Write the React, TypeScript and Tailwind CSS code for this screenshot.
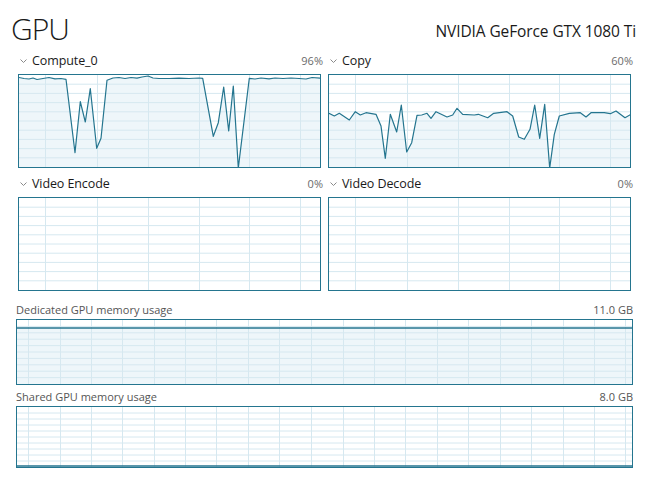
import React from "react";

type Pt = [number, number];

const LINE = "#24758f";
const FILL = "#eef6fa";
const GRID = "#d6e8f0";

const computePts: Pt[] = [
  [0, 2.5], [5, 3.5], [10, 4], [14, 3], [18, 4.5], [24, 3.5], [30, 2.5], [36, 3.8], [42, 3.5], [47, 4.3],
  [56, 77.7], [61.3, 26.7], [66.3, 47], [71.3, 13.7], [77.7, 73.3], [82, 63.3],
  [88, 5.3], [94, 3], [100, 2.5], [106, 3.5], [112, 2.5], [118, 3.2], [123, 2], [129, 1], [134, 3],
  [140, 3.5], [150, 3.5], [160, 3.2], [170, 3.5], [180, 3], [183.7, 3.3],
  [194.3, 61.3], [199.3, 47.7], [204.7, 12], [209.7, 56], [214.3, 11], [219.3, 93],
  [230.3, 3.3], [236, 4], [242, 3], [250, 3.8], [256, 3], [264, 3.5], [272, 3], [280, 3.5],
  [287, 4], [293, 2.5], [302, 3.3],
];

const copyPts: Pt[] = [
  [0, 38.3], [5.3, 41], [10.3, 38.3], [20.3, 45], [26.3, 36.7], [31.3, 40], [37, 37.7], [47, 39.3],
  [52, 51], [56.3, 83.3], [61.3, 39.3], [67.7, 57], [72.3, 30], [77.7, 77], [82.7, 67.7], [88, 40.3],
  [92.7, 40], [98, 38.3], [102, 43.3], [107, 36.7], [118, 42], [123.7, 40], [128, 33.3], [133.7, 39.3],
  [145.3, 40], [149.3, 39.3], [158.7, 42.7], [164.7, 38.3], [178, 36.7], [183.7, 41], [189.7, 62],
  [195.3, 64.3], [201, 54.3], [205.7, 30], [210.7, 63.3], [215.7, 29.3], [220.7, 93], [225.3, 59.3],
  [230.3, 41], [240.3, 38.3], [251.3, 37.7], [257, 42], [262, 37.7], [275.3, 37.7], [281.3, 38.7],
  [287, 36], [296, 42.7], [303, 38.7],
];

const smallCols = [26, 78, 129, 180, 230, 281];
const memCols = [11, 43, 74, 105, 137, 168, 199, 231, 262, 294, 326, 357, 388, 420, 451, 483, 514, 546, 577, 608];

function Chart({
  w,
  h,
  cols,
  pts,
  level,
}: {
  w: number;
  h: number;
  cols: number[];
  pts?: Pt[];
  level?: number;
}) {
  const rows = Array.from({ length: 9 }, (_, i) => ((i + 1) * h) / 10);
  const line = pts ? pts.map((p) => p.join(",")).join(" ") : "";
  return (
    <svg width={w} height={h} viewBox={`0 0 ${w} ${h}`} className="block">
      {pts && <polygon points={`0,${h} ${line} ${w},${h}`} fill={FILL} />}
      {level !== undefined && <rect x={0} y={level} width={w} height={h - level} fill={FILL} />}
      {rows.map((y) => (
        <line key={y} x1={0} x2={w} y1={y} y2={y} stroke={GRID} strokeWidth={1} />
      ))}
      {cols.map((x) => (
        <line key={x} x1={x + 0.5} x2={x + 0.5} y1={0} y2={h} stroke={GRID} strokeWidth={1} />
      ))}
      {pts && <polyline points={line} fill="none" stroke={LINE} strokeWidth={1.2} strokeLinejoin="round" />}
      {level !== undefined && <line x1={0} x2={w} y1={level} y2={level} stroke={LINE} strokeWidth={1.5} />}
    </svg>
  );
}

function Chevron() {
  return (
    <svg width="7" height="4" viewBox="0 0 7 4" className="mr-[5px]">
      <path d="M0.5 0.5 L3.5 3.5 L6.5 0.5" fill="none" stroke="#8a8a8a" strokeWidth="1" />
    </svg>
  );
}

function Engine({ name, pct, pts }: { name: string; pct: string; pts?: Pt[] }) {
  return (
    <div className="w-[305px]">
      <div className="flex h-[18px] items-center justify-between">
        <div className="flex items-center pl-[2px]">
          <Chevron />
          <span className="text-[12.5px] tracking-[-0.1px] text-[#1a1a1a]">{name}</span>
        </div>
        <span className="text-[11px] text-[#6b6b6b]">{pct}</span>
      </div>
      <div className="mt-[4px] h-[94px] w-[303px] border border-[#24758f] bg-white">
        <Chart w={301} h={92} cols={smallCols} pts={pts} />
      </div>
    </div>
  );
}

function Memory({ name, size, h, level }: { name: string; size: string; h: number; level: number }) {
  return (
    <div className="w-[617px]">
      <div className="flex h-[17px] items-center justify-between text-[11px] text-[#555]">
        <span>{name}</span>
        <span>{size}</span>
      </div>
      <div className="border border-[#24758f] bg-white" style={{ height: h }}>
        <Chart w={615} h={h - 2} cols={memCols} level={level} />
      </div>
    </div>
  );
}

export default function App() {
  return (
    <div
      className="h-[488px] w-[648px] overflow-hidden bg-white"
      style={{ fontFamily: '"Open Sans", "Noto Sans", sans-serif' }}
    >
      <div className="flex h-[52px] items-center justify-between pl-[11px] pr-[12px]">
        <span className="mt-[4px] text-[30px] font-light tracking-[-1px] text-[#1a1a1a]">GPU</span>
        <span className="mt-[12px] text-[15.5px] tracking-[-0.1px] text-[#1a1a1a]">NVIDIA GeForce GTX 1080 Ti</span>
      </div>
      <div className="grid grid-cols-[305px_305px] gap-x-[5px] gap-y-[7px] pl-[18px]">
        <Engine name="Compute_0" pct="96%" pts={computePts} />
        <Engine name="Copy" pct="60%" pts={copyPts} />
        <Engine name="Video Encode" pct="0%" />
        <Engine name="Video Decode" pct="0%" />
      </div>
      <div className="mt-[11px] flex flex-col gap-[4px] pl-[16px]">
        <Memory name="Dedicated GPU memory usage" size="11.0 GB" h={66} level={8} />
        <Memory name="Shared GPU memory usage" size="8.0 GB" h={62} level={59} />
      </div>
    </div>
  );
}
